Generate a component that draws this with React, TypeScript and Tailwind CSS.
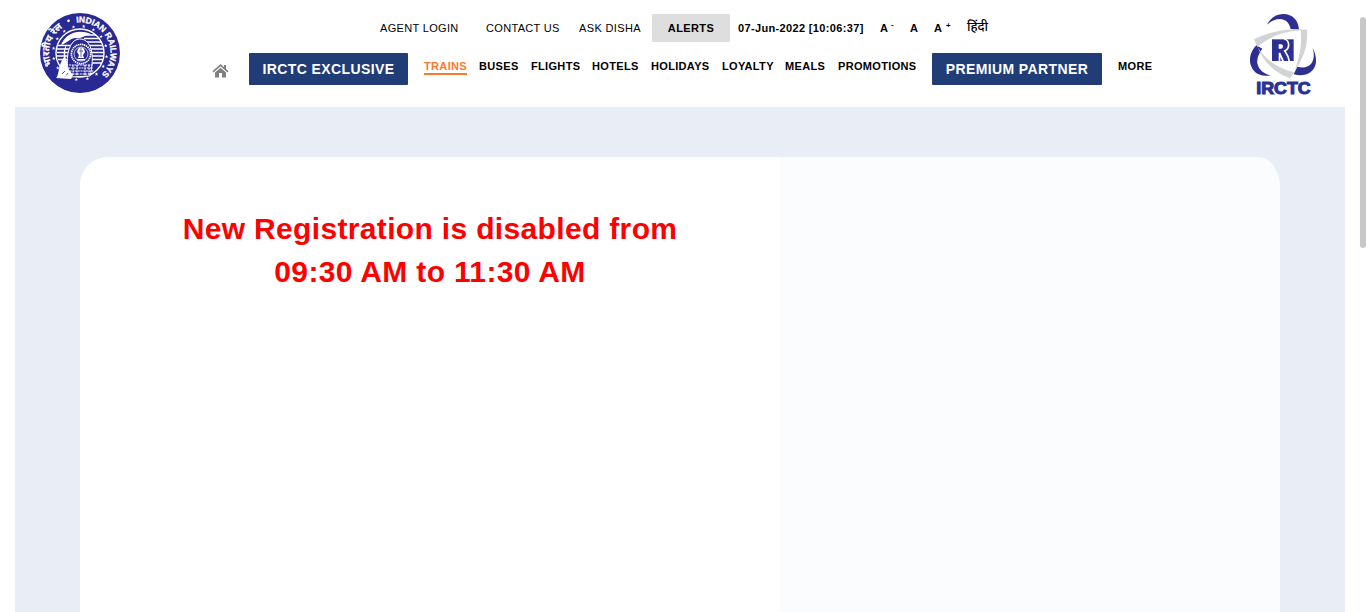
import React from "react";

const STAR = "M0,-2.2L.6,-.7L2.1,-.7L.9,.3L1.3,1.8L0,.9L-1.3,1.8L-.9,.3L-2.1,-.7L-.6,-.7Z";
const starAngles = [-82, -60, -38, -16, 8, 30, 52, 74, 98, 122, 146, 168, 190, 212, 234, 256];

function RailwaysEmblem() {
  return (
    <svg viewBox="0 0 80 80" className="block h-20 w-20">
      <defs>
        <path id="english-arc" d="M36.500,9.700 A30.500,30.500 0 1 1 40,70.500" />
        <path id="hindi-arc" d="M11.800,52.500 A30.500,30.500 0 0 1 30,11" />
      </defs>
      <circle cx="40" cy="40" r="40" fill="#292994" />
      <circle cx="40" cy="40" r="24" fill="#292994" stroke="#fff" strokeWidth="1.4" />
      <g stroke="#fff" strokeWidth="1.6">
        <path d="M43,22h13M44,25.500h16M45,29h17M47,32.500h16M49,36h15M49,39.500h15M48,43h16M51,46.500h12M52,50h10" />
        <path d="M18,32.500h13M17,36h13M17,39.500h14M17,43h13M18,46.500h10" />
      </g>
      <path d="M21,32C25,22 36,15 51,21C43,23 42,26 35,25C29,26 27,30 21,32Z" fill="#fff" />
      <path d="M27,31C24,39 25,45 28,51L25,64H17C20,56 18,53 24,44C23,39 24,35 27,31Z" fill="#fff" />
      <path d="M30,64C26,53 26,37 33,29C38,24 46,25 50,33C54,43 52,55 50,63Z" fill="#292994" stroke="#fff" strokeWidth="1" />
      <circle cx="41" cy="41" r="9.600" fill="#292994" stroke="#fff" strokeWidth="1.7" strokeDasharray="1.4 .6" />
      <circle cx="41" cy="41" r="7" fill="none" stroke="#fff" strokeWidth=".7" />
      <path d="M38,36c1,-2 5,-2 6,0l1,3-2,3 1,3h-6l1,-3-2,-3ZM37,46h8v1.500h-8Z" fill="#fff" />
      <path d="M41,35v9M39,38h4" stroke="#292994" strokeWidth=".7" />
      <path d="M29,52h24M28,55h25M27,58h27M29,61h23M33,52v10M37,52v11M45,52v11M49,52v10" stroke="#fff" strokeWidth="1.100" strokeDasharray="2 .7" />
      <path d="M16,65L27,54L33,62L31,66Z" fill="#fff" />
      <path d="M22,61l3,-3M25,64l3,-4" stroke="#292994" strokeWidth=".8" />
      {starAngles.map((a) => (
        <g key={a} transform={`translate(${40 + 26.800 * Math.cos((a * Math.PI) / 180)} ${40 + 26.800 * Math.sin((a * Math.PI) / 180)})`}>
          <path d={STAR} fill="#fff" transform="scale(.85)" />
        </g>
      ))}
      <circle cx="28.500" cy="7.800" r="1.400" fill="#fff" />
      <text fill="#fff" stroke="#fff" strokeWidth=".3" fontFamily="Liberation Sans, sans-serif" fontWeight="700" fontSize="8.500">
        <textPath href="#english-arc">INDIAN RAILWAYS</textPath>
      </text>
      <text fill="#fff" stroke="#fff" strokeWidth=".2" fontFamily="Noto Sans Devanagari, Noto Sans, sans-serif" fontWeight="700" fontSize="9.500">
        <textPath href="#hindi-arc">भारतीय रेल</textPath>
      </text>
    </svg>
  );
}

function IrctcLogo() {
  return (
    <svg viewBox="45 27 201 249" className="block h-[83px] w-[67px]">
      <g fill="#2d3092">
        <path d="M96,59C106,39 124,27 145,27C173,27 191,47 192,74L167,72C163,52 151,43 134,42C119,42 107,49 96,59Z" />
        <path d="M64,121C44,141 39,169 52,191C64,210 85,214 107,212C86,206 71,195 67,175C65,158 73,143 82,131Z" />
        <path d="M233,129C244,150 247,174 237,190C225,210 202,214 176,208L187,185C206,190 221,187 230,174C238,161 238,145 233,129Z" />
      </g>
      <g fill="#d1d3d4">
        <path d="M57,103C104,79 162,68 216,74V77C159,75 107,91 67,126Z" />
        <path d="M216,74C220,119 205,161 179,197C194,157 201,118 197,76Z" />
        <path d="M68,126C88,161 128,190 178,202L165,220C117,202 83,168 68,126Z" />
      </g>
      <path d="M111,103H176V168H111Z" fill="#2d3092" />
      <path d="M148,102C164,106 166,130 149,138C154,145 160,151 163,170" fill="none" stroke="#fff" strokeWidth="5" />
      <path d="M131,118H138C146,118 146,131 138,131H131ZM131,143H136L147,168H141L136,156V168H131Z" fill="#fff" />
      <text x="64" y="266" textLength="163" lengthAdjust="spacingAndGlyphs" fontFamily="Liberation Sans, sans-serif" fontSize="47" fontWeight="700" fill="#2d3092" stroke="#2d3092" strokeWidth="3">IRCTC</text>
    </svg>
  );
}

function HomeIcon() {
  return (
    <svg viewBox="0 0 17 14" className="mt-[14px] block h-[14px] w-[17px] shrink-0" fill="#808080">
      <path d="M8.500,3.800L14,8.500V13.500H10V9H7V13.500H3V8.500Z" />
      <path d="M1,7.800L8.500,1.200L16,7.800" fill="none" stroke="#808080" strokeWidth="1.700" />
      <path d="M12,1H14V6L12,4.200Z" />
    </svg>
  );
}

const link = "shrink-0 whitespace-nowrap text-[11px] leading-4";

function TopLinks() {
  return (
    <div className="flex h-7 items-center pl-[260px]">
      <a className={`${link} w-[106px] tracking-[0.33px]`}>AGENT LOGIN</a>
      <a className={`${link} w-[93px] tracking-[0.33px]`}>CONTACT US</a>
      <a className={`${link} w-[73px] tracking-[0.36px]`}>ASK DISHA</a>
      <a className="flex h-7 w-[78px] shrink-0 items-center justify-center bg-[#dedede] text-[11px] font-bold tracking-[0.4px]">ALERTS</a>
      <span className={`${link} w-[142px] pl-2 font-bold tracking-[0.35px]`}>07-Jun-2022 [10:06:37]</span>
      <a className={`${link} flex w-[38px] pl-2 font-bold`}>A<span className="-mt-[3px] ml-[3px] text-[8px]">-</span></a>
      <a className={`${link} w-[24px] font-bold`}>A</a>
      <a className={`${link} flex w-[33px] font-bold`}>A<span className="-mt-[2px] ml-[4px] text-[8px]">+</span></a>
      <a className="shrink-0 font-['Noto_Sans_Devanagari','Noto_Sans',sans-serif] text-[13px] font-medium leading-4">हिंदी</a>
    </div>
  );
}

function MainNav() {
  const item = "shrink-0 whitespace-nowrap pt-[5px] text-[11px] font-bold leading-4 tracking-[0.33px]";
  const box = "flex h-8 shrink-0 items-center justify-center whitespace-nowrap rounded-[1px] bg-[#213d77] text-sm font-bold tracking-[0.4px] text-white";
  return (
    <nav className="mt-[11px] flex h-8 items-start pl-[92px]">
      <a className="-mt-[3px] w-[37px] shrink-0"><HomeIcon /></a>
      <a className={`${box} w-[159px]`}>IRCTC EXCLUSIVE</a>
      <a className="ml-4 mr-3 mt-[5px] h-[17px] w-[43px] shrink-0 whitespace-nowrap border-b-2 border-[#fb792b] text-[11px] font-bold leading-4 tracking-[0.35px] text-[#fb792b]">TRAINS</a>
      <a className={`${item} w-[52px]`}>BUSES</a>
      <a className={`${item} w-[61px]`}>FLIGHTS</a>
      <a className={`${item} w-[59px]`}>HOTELS</a>
      <a className={`${item} w-[71px]`}>HOLIDAYS</a>
      <a className={`${item} w-[63px]`}>LOYALTY</a>
      <a className={`${item} w-[53px]`}>MEALS</a>
      <a className={`${item} w-[94px]`}>PROMOTIONS</a>
      <a className={`${box} w-[170px]`}>PREMIUM PARTNER</a>
      <a className={`${item} ml-4`}>MORE</a>
    </nav>
  );
}

export default function App() {
  return (
    <div className="flex h-[612px] overflow-hidden bg-white font-['Liberation_Sans',Arial,sans-serif] text-black">
      <div className="flex w-[1360px] shrink-0 flex-col pl-[15px] pr-[15px]">
        <header className="flex h-[107px] shrink-0 items-start pl-[25px]">
          <div className="mt-[13px] w-20 shrink-0"><RailwaysEmblem /></div>
          <div className="w-[1130px] shrink-0 pt-[14px]">
            <TopLinks />
            <MainNav />
          </div>
          <div className="mt-[14px] shrink-0"><IrctcLogo /></div>
        </header>
        <main className="flex flex-1 bg-[#e9eef6] pl-[65px] pr-[65px] pt-[50px]">
          <section className="w-[700px] shrink-0 rounded-tl-[28px] bg-white pt-[50px]">
            <h1 className="text-center text-[30px] font-bold leading-[43px] tracking-[0.34px] text-[#ff0000]">
              New Registration is disabled from<br />09:30 AM to 11:30 AM
            </h1>
          </section>
          <aside className="w-[500px] shrink-0 bg-[#fbfcfe] [border-top-right-radius:22px_30px]" />
        </main>
      </div>
      <div className="mt-[17px] h-[231px] w-[6px] shrink-0 rounded-[3px] bg-[#c8c8c8]" />
    </div>
  );
}
